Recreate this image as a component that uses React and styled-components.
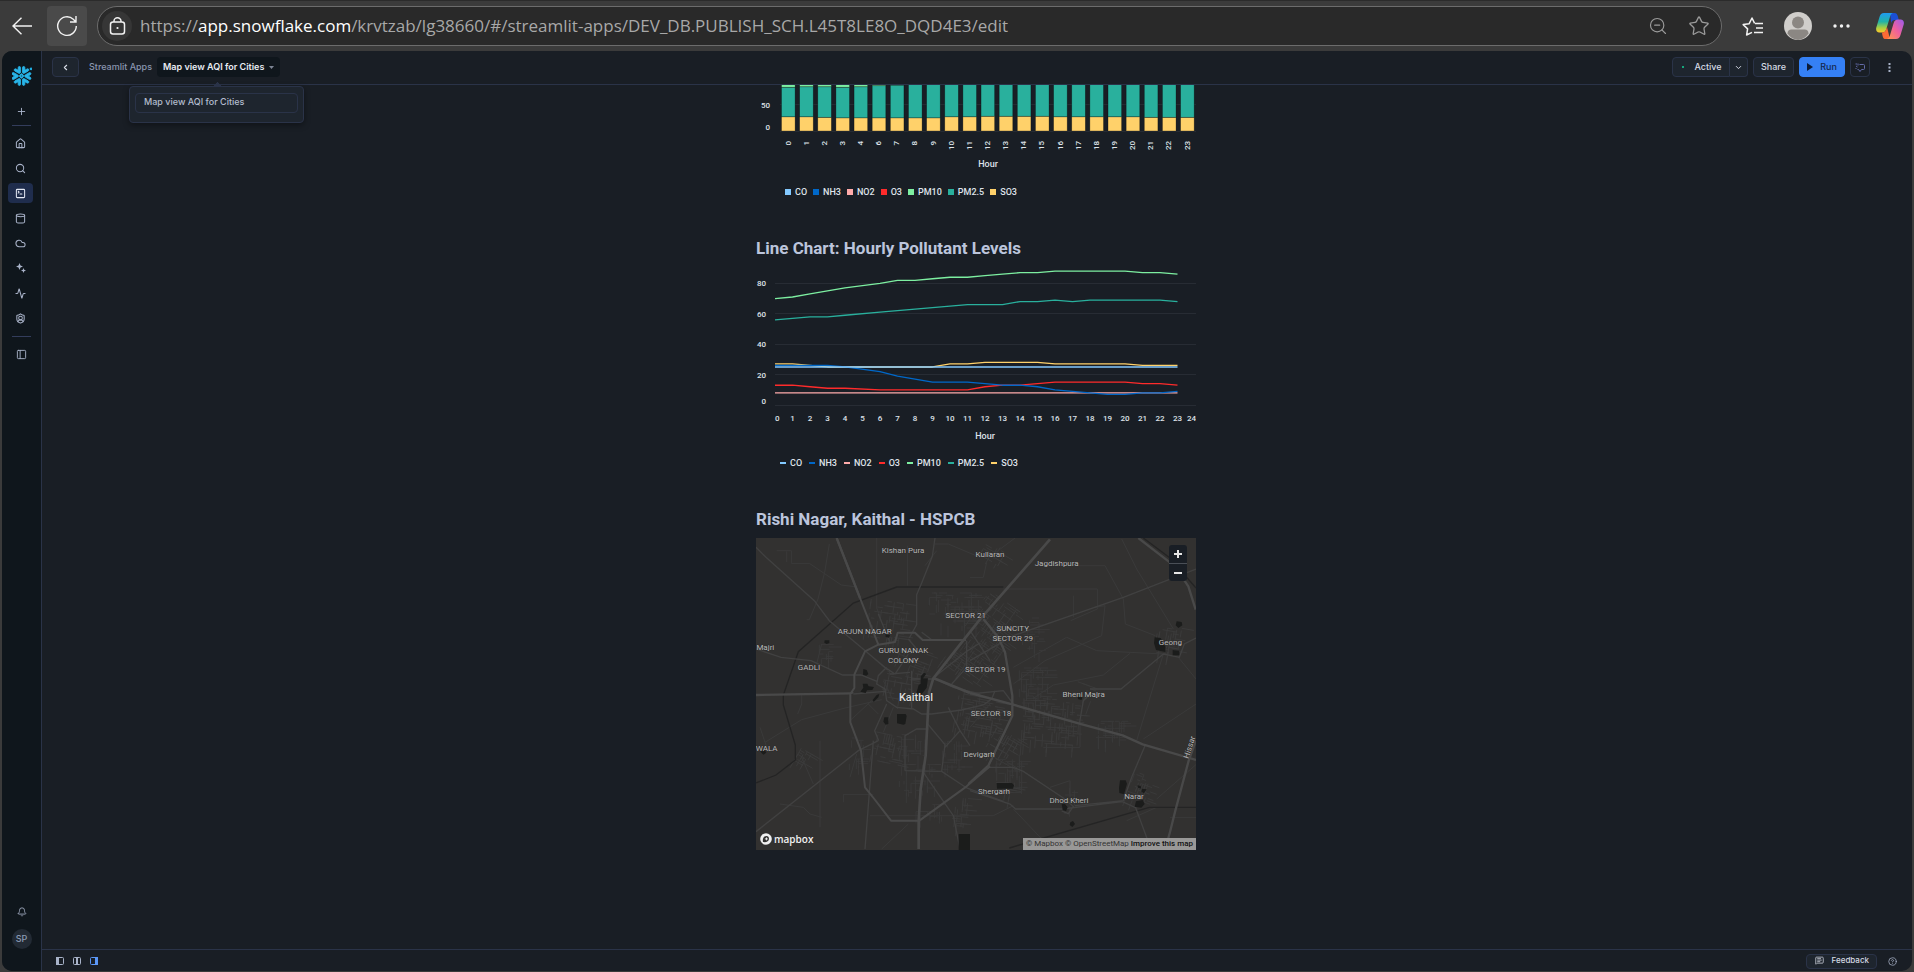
import React from "react";
import styled, { createGlobalStyle } from "styled-components";
import {
  Activity, Bell, ChevronDown, ChevronLeft, CircleHelp, Cloud, Cylinder, House,
  MessageSquareText, PanelLeft, Plus, Search, ShieldUser, SquareTerminal, Star, ZoomOut,
} from "lucide-react";
import { SiSnowflake } from "react-icons/si";

const c = {
  chrome: "#3b3b3b",
  page: "#191e25",
  side: "#0f161c",
  line: "#2a3348",
  raised: "#1e252e",
  text: "#d5dae4",
  muted: "#8a96b0",
  blue: "#3580f5",
};

const GlobalStyle = createGlobalStyle`
  *, *::before, *::after { box-sizing: border-box; }
  body { margin: 0; background: ${c.chrome}; font-family: Inter, "Liberation Sans", sans-serif; }
  button { font: inherit; color: inherit; background: none; border: 0; padding: 0; cursor: pointer; }
  a { color: inherit; text-decoration: none; }
  svg { display: block; flex: none; }
`;

/* ---------- shell ---------- */

const Window = styled.div`
  display: flex;
  flex-direction: column;
  height: 100vh;
  background: ${c.chrome};
`;

const BrowserBar = styled.header`
  display: flex;
  align-items: center;
  height: 51px;
  flex: none;
  padding: 0 4px 0 12px;
  border-top: 1px solid #2b2b2b;
  color: #f2f2f2;
`;

const BrowserButton = styled.button`
  display: grid;
  place-items: center;
  width: ${(p) => p.$w}px;
  height: 40px;
  border-radius: 4px;
  background: ${(p) => (p.$filled ? "#4a4a4a" : "none")};
`;

const BackGroup = styled.div`
  display: flex;
  gap: 15px;
  margin-right: 10px;
`;

const AddressBar = styled.div`
  display: flex;
  align-items: center;
  flex: 1;
  min-width: 0;
  height: 40px;
  padding: 0 13px 0 4px;
  border: 1px solid #6c6c6c;
  border-radius: 20px;
  background: #292929;
  color: #9b9b9b;
`;

const SiteInfo = styled.button`
  display: grid;
  place-items: center;
  flex: none;
  width: 30px;
  height: 30px;
  margin-right: 8px;
  border-radius: 50%;
  background: #363636;
  color: #f2f2f2;
`;

const Url = styled.div`
  flex: 1;
  min-width: 0;
  overflow: hidden;
  white-space: nowrap;
  font: 17px/28px "Open Sans", sans-serif;
  color: #a8a8a8;
  outline: none;
  strong { font-weight: 400; color: #fff; }
`;

const AddressActions = styled.div`
  display: flex;
  gap: 20px;
`;

const BrowserActions = styled.div`
  display: flex;
  align-items: center;
  gap: 20px;
  margin-left: 20px;
`;

const AppFrame = styled.div`
  display: flex;
  flex: 1;
  min-height: 0;
  margin: 0 2px 1px;
  border-radius: 10px;
  overflow: hidden;
  background: ${c.page};
`;

/* ---------- sidebar ---------- */

const Sidebar = styled.nav`
  display: flex;
  flex-direction: column;
  align-items: center;
  flex: none;
  width: 40px;
  padding: 15px 0 22px;
  background: ${c.side};
  border-right: 1px solid ${c.line};
  color: #a9b3c9;
`;

const Logo = styled.a`
  color: #29b5e8;
  margin-bottom: 15px;
  svg { stroke-width: 1; }
`;

const NavList = styled.div`
  display: flex;
  flex-direction: column;
  gap: 5px;
  margin-right: 2px;
`;

const NavButton = styled.button`
  display: grid;
  place-items: center;
  width: 25px;
  height: 20px;
  border-radius: 4px;
  color: ${(p) => (p.$active ? "#e4e9f5" : "inherit")};
  background: ${(p) => (p.$active ? "#1f2d4d" : "none")};
`;

const Rule = styled.hr`
  width: 19px;
  height: 1px;
  margin: ${(p) => p.$gap};
  border: 0;
  background: #333d5c;
`;

const SidebarFoot = styled.div`
  display: flex;
  flex-direction: column;
  align-items: center;
  gap: 7px;
  margin-top: auto;
`;

const Avatar = styled.button`
  width: 20px;
  height: 20px;
  border-radius: 50%;
  background: #222a34;
  color: #8a9bb5;
  font-size: 9px;
  line-height: 20px;
  font-weight: 500;
`;

/* ---------- top bar ---------- */

const Main = styled.div`
  display: flex;
  flex-direction: column;
  flex: 1;
  min-width: 0;
`;

const TopBar = styled.div`
  display: flex;
  align-items: center;
  justify-content: space-between;
  flex: none;
  height: 34px;
  padding: 0 14px 1px 10px;
  border-bottom: 1px solid ${c.line};
  font-size: 9px;
  line-height: 12px;
  font-weight: 500;
  color: ${c.text};
`;

const Group = styled.div`
  display: flex;
  align-items: center;
  gap: 5px;
`;

const Crumb = styled.a`
  margin-left: 5px;
  color: ${c.muted};
`;

const BoxButton = styled.button`
  display: flex;
  align-items: center;
  justify-content: center;
  gap: 7px;
  height: 20px;
  width: ${(p) => p.$w}px;
  border: 1px solid ${(p) => (p.$primary ? c.blue : c.line)};
  border-radius: 4px;
  background: ${(p) => (p.$primary ? c.blue : p.$bare ? "none" : c.raised)};
  color: ${(p) => (p.$primary ? "#14284d" : "inherit")};
`;

const SplitButton = styled.div`
  display: flex;
  ${BoxButton}:first-child { border-radius: 4px 0 0 4px; }
  ${BoxButton}:last-child { border-radius: 0 4px 4px 0; border-left: 0; }
`;

const StatusDot = styled.i`
  width: 2px;
  height: 2px;
  margin: 0 3px 0 2px;
  background: #16a67c;
`;

const TitleMenu = styled.div`
  position: relative;
`;

const TitleButton = styled.button`
  display: flex;
  align-items: center;
  gap: 5px;
  height: 20px;
  padding: 0 6px;
  border-radius: 4px;
  background: ${c.side};
  font-weight: 600;
  color: #e8ebf2;
  white-space: nowrap;
`;

const Popover = styled.div`
  position: absolute;
  z-index: 2;
  top: 29px;
  left: -28px;
  width: 175px;
  height: 37px;
  padding: 6px 5px;
  border: 1px solid ${c.line};
  border-radius: 4px;
  background: ${c.raised};
  box-shadow: 0 2px 6px #0006;
  &::before {
    content: "";
    position: absolute;
    top: -4px;
    left: 84px;
    width: 7px;
    height: 7px;
    background: ${c.line};
    transform: rotate(45deg);
    clip-path: polygon(0 0, 100% 0, 0 100%);
  }
`;

const PopoverItem = styled.button`
  display: block;
  width: 100%;
  height: 20px;
  padding: 0 8px 2px;
  border: 1px solid ${c.line};
  border-radius: 4px;
  text-align: left;
  color: #b3bccd;
`;

const MoreButton = styled.button`
  display: grid;
  place-items: center;
  width: 18px;
  height: 20px;
  margin-left: 5px;
  color: #a9b3c9;
`;

/* ---------- report ---------- */

const Scroll = styled.main`
  flex: 1;
  min-height: 0;
  padding-right: 2px;
  overflow: auto;
`;

const Report = styled.div`
  width: 100%;
  max-width: 440px;
  margin: 0 auto;
  font-family: Roboto, sans-serif;
`;

const Heading = styled.h3`
  margin: 39px 0 7px;
  font-size: 17px;
  line-height: 24px;
  font-weight: 700;
  color: #bcc5dc;
`;

const Chart = styled.svg`
  width: 100%;
  height: auto;
  text { font-family: Roboto, sans-serif; font-size: 8px; font-weight: 500; fill: #dfe3ea; }
`;

const AxisTitle = styled.text`
  && { font-size: 9px; }
`;

const Legend = styled.ul`
  display: flex;
  gap: ${(p) => p.$gap}px;
  margin: 14px 0 0;
  padding: 0 0 0 ${(p) => p.$indent}px;
  list-style: none;
`;

const LegendItem = styled.li`
  display: flex;
  align-items: center;
  gap: 4px;
  font-size: 9px;
  line-height: 10px;
  font-weight: 500;
  color: #dfe3ea;
  &::before {
    content: "";
    width: 6px;
    height: ${(p) => (p.$flat ? 2 : 6)}px;
    background: ${(p) => p.$color};
  }
`;

const MapFrame = styled.div`
  position: relative;
  overflow: hidden;
  background: #323130;
`;

const MapArt = styled.svg`
  width: 100%;
  height: auto;
  fill: none;
  text {
    font-family: Roboto, sans-serif;
    font-size: 24px;
    fill: #b9b9b9;
    stroke: #2a2929;
    stroke-width: 2px;
    paint-order: stroke;
    text-anchor: middle;
  }
`;

const ZoomControl = styled.div`
  position: absolute;
  top: 7px;
  right: 9px;
  display: flex;
  flex-direction: column;
  border-radius: 3px;
  background: ${c.page};
`;

const ZoomButton = styled.button`
  display: grid;
  place-items: center;
  width: 18px;
  height: 18px;
  color: #e6e6e6;
  & + & { border-top: 1px solid #4a4f57; }
`;

const MapLogo = styled.a`
  position: absolute;
  left: 4px;
  bottom: 5px;
  display: flex;
  align-items: center;
  gap: 2px;
  font: 600 10px/12px "Open Sans", sans-serif;
  color: #f0f0f0;
`;

const Attribution = styled.div`
  position: absolute;
  right: 0;
  bottom: 0;
  display: flex;
  gap: 2px;
  padding: 0 3px;
  font: 8px/12px Roboto, sans-serif;
  color: #333;
  background: #999897;
  strong { font-weight: 500; color: #111; }
`;

/* ---------- bottom bar ---------- */

const BottomBar = styled.footer`
  display: flex;
  align-items: center;
  justify-content: space-between;
  flex: none;
  height: 22px;
  padding: 1px 15px 0 14px;
  border-top: 1px solid ${c.line};
  color: #a9b3c9;
`;

const LayoutButtons = styled.div`
  display: flex;
  gap: 9px;
`;

const LayoutButton = styled.button`
  color: ${(p) => (p.$active ? "#5b97f7" : "inherit")};
`;

const Feedback = styled.button`
  display: flex;
  align-items: center;
  gap: 8px;
  height: 15px;
  padding: 0 7px 2px 8px;
  border: 1px solid ${c.line};
  border-radius: 4px;
  background: ${c.raised};
  font-size: 8px;
  line-height: 10px;
  font-weight: 500;
  color: ${c.text};
`;

const FootGroup = styled.div`
  display: flex;
  align-items: center;
  gap: 11px;
`;

/* ---------- data ---------- */

const HOURS = [0, 1, 2, 3, 4, 6, 7, 8, 9, 10, 11, 12, 13, 14, 15, 16, 17, 18, 19, 20, 21, 22, 23];
const SERIES = [
  { name: "CO", color: "#83c9ff", values: HOURS.map(() => 25) },
  { name: "NH3", color: "#0068c9", values: [26, 26, 26, 26, 25, 22, 19, 17, 15, 15, 15, 14, 13, 13, 12, 10, 9, 8, 7, 7, 8, 8, 9] },
  { name: "NO2", color: "#ffabab", values: HOURS.map(() => 8) },
  { name: "O3", color: "#ff2b2b", values: [13, 13, 12, 11, 11, 10, 10, 10, 10, 10, 10, 12, 13, 13, 14, 15, 15, 15, 15, 15, 14, 14, 13] },
  { name: "PM10", color: "#7defa1", values: [70, 71, 73, 75, 77, 80, 82, 82, 83, 84, 84, 85, 86, 87, 87, 88, 88, 88, 88, 88, 87, 87, 86] },
  { name: "PM2.5", color: "#29b09d", values: [56, 57, 58, 58, 59, 61, 62, 63, 64, 65, 66, 66, 66, 68, 68, 69, 68, 69, 69, 69, 69, 69, 68] },
  { name: "SO3", color: "#ffd16a", values: [27, 27, 26, 25, 25, 25, 25, 25, 25, 27, 27, 28, 28, 28, 28, 27, 27, 27, 27, 27, 26, 26, 26] },
];

function BarChart() {
  const base = 46;
  const unit = 0.527;
  const stack = [SERIES[6], SERIES[5], SERIES[4]];
  return (
    <Chart viewBox="0 0 440 88" role="img" aria-label="Stacked bar chart by hour">
      <path d="M24 19.5H440M24 46.5H440" stroke="#262b33" />
      {HOURS.map((hour, i) => {
        const x = 25.5 + i * 18.14;
        let total = 0;
        return (
          <g key={hour}>
            {stack.map((s) => {
              const bottom = base - total * unit;
              total += s.values[i];
              const top = base - total * unit;
              return (
                <rect key={s.name} x={x} y={top} width="13.6" height={bottom - top} fill={s.color} stroke="#000" strokeOpacity=".4" strokeWidth=".7" />
              );
            })}
            <text transform={`translate(${x + 9} 56) rotate(-90)`} textAnchor="end">
              {hour}
            </text>
          </g>
        );
      })}
      <text x="14" y="23" textAnchor="end">50</text>
      <text x="14" y="45" textAnchor="end">0</text>
      <AxisTitle x="232" y="82" textAnchor="middle">Hour</AxisTitle>
    </Chart>
  );
}

function LineChart() {
  const y = (v) => 138 - v * 1.521;
  const x = (h) => 19 + h * 17.5;
  return (
    <Chart viewBox="0 0 440 177" role="img" aria-label="Line chart by hour">
      {[0, 20, 40, 60, 80].map((v) => (
        <g key={v}>
          <path d={`M19 ${Math.floor(y(v)) + 0.5}H440`} stroke="#272c34" />
          <text x="10" y={v ? y(v) + 3 : 137} textAnchor="end">{v}</text>
        </g>
      ))}
      {[...SERIES].reverse().map((s) => (
        <polyline
          key={s.name}
          fill="none"
          stroke={s.color}
          strokeWidth="1.3"
          strokeLinejoin="round"
          points={s.values.map((v, i) => `${x(HOURS[i])},${y(v)}`).join(" ")}
        />
      ))}
      {Array.from({ length: 25 }, (_, h) => (
        <text key={h} x={h === 24 ? 440 : x(h)} y="154" textAnchor={h === 24 ? "end" : h === 0 ? "start" : "middle"}>
          {h}
        </text>
      ))}
      <AxisTitle x="229" y="172" textAnchor="middle">Hour</AxisTitle>
    </Chart>
  );
}

const SeriesLegend = ({ flat, indent, gap }) => (
  <Legend $indent={indent} $gap={gap}>
    {SERIES.map((s) => (
      <LegendItem key={s.name} $color={s.color} $flat={flat}>{s.name}</LegendItem>
    ))}
  </Legend>
);

/* ---------- map ---------- */

// Street blocks: x, y, width, height, number of streets, rotation.
const BLOCKS = [
  [330, 190, 120, 120, 60, 8], [520, 165, 150, 110, 70, 0], [420, 330, 110, 70, 26, 20],
  [380, 400, 110, 90, 40, 10], [660, 180, 110, 110, 60, 35], [620, 260, 110, 170, 90, 35],
  [560, 350, 80, 60, 30, 35], [600, 470, 140, 120, 90, 10], [790, 390, 90, 120, 60, 0],
  [800, 470, 170, 160, 120, 4], [690, 580, 90, 90, 50, 30], [430, 590, 80, 70, 24, 0],
  [350, 590, 90, 90, 36, 12], [430, 680, 110, 90, 40, 0], [560, 610, 60, 90, 26, 0],
  [720, 650, 80, 100, 36, 0], [800, 240, 60, 110, 26, 0], [1020, 550, 90, 60, 40, 0],
  [1200, 265, 80, 90, 34, 10], [1120, 710, 70, 90, 30, 20], [590, 780, 50, 90, 26, 5],
  [120, 640, 50, 50, 20, 30], [190, 320, 40, 50, 14, 0], [480, 800, 80, 40, 16, 0],
  [680, 15, 70, 60, 16, 30], [720, 740, 70, 40, 14, 10], [280, 600, 60, 90, 14, 0],
  [920, 750, 50, 60, 12, 0], [955, 440, 60, 50, 12, 20],
];

function streets() {
  let seed = 7;
  const rnd = () => (seed = (seed * 16807) % 2147483647) / 2147483647;
  return BLOCKS.map(([x, y, w, h, n, r]) => {
    let d = "";
    for (let i = 0; i < n; i += 1) {
      const px = x + Math.floor((rnd() * w) / 7) * 7;
      const py = y + Math.floor((rnd() * h) / 7) * 7;
      const len = 10 + rnd() * 32;
      d += rnd() > 0.5 ? `M${px} ${py}h${len.toFixed(0)}` : `M${px} ${py}v${len.toFixed(0)}`;
    }
    return { d, t: `rotate(${r} ${x + w / 2} ${y + h / 2})` };
  });
}
const STREETS = streets();

const PLACES = [
  [441, 44, "Kishan Pura"], [702, 56, "Kullaran"], [902, 84, "Jagdishpura"], [629, 241, "SECTOR 21"],
  [326, 287, "ARJUN NAGAR"], [770, 279, "SUNCITY"], [770, 309, "SECTOR 29"], [28, 337, "Majri"],
  [442, 344, "GURU NANAK"], [442, 375, "COLONY"], [159, 395, "GADLI"], [1243, 320, "Geong"],
  [688, 402, "SECTOR 19"], [983, 477, "Bheni Majra"], [705, 534, "SECTOR 18"], [32, 639, "WALA"],
  [669, 656, "Devigarh"], [714, 768, "Shergarh"], [939, 795, "Dhod Kheri"], [1134, 782, "Narar"],
];

const CityMap = () => (
  <MapArt viewBox="0 0 1320 936" role="img" aria-label="Map of Kaithal">
    <g stroke="#3b3b3b" strokeWidth="2.5">
      {STREETS.map((s, i) => <path key={i} d={s.d} transform={s.t} />)}
    </g>
    {/* lanes */}
    <g transform="translate(-48 -132)" stroke="#3a3a3a" strokeWidth="3">
      <path d="M110 170h44v38h54l96 65 40 5M140 172v32M268 150l-14 85-20 80-26 62h-8M410 132v210l10 25M502 155v120M585 150h40l95 40M590 170l-35 45M245 450l-15 60M165 600h20v30l-12 30M75 745l110-68 130-35 110-25M60 700l15 45 10 30M240 740v260M185 790l35 80M330 850l20-70M120 930l70 10 20 20 35 10M390 965h330M425 1065l80-75M310 925v-24h90M460 640l-30 75M385 630l30 30M330 680l65-60M430 560l30 60" />
    </g>
    <g transform="translate(642 -132)" stroke="#3a3a3a" strokeWidth="3">
      <path d="M455 135l45 90 110 180M200 215h205l55 100 6 75 90 35M0 250h40l10-45M135 132l-60 45M100 285h282v60l-80 35M310 305v65M375 340l30-5-10 90-170 75-95 70M130 520l160-90 90 40 200 10M480 478l-80 65-150 30-60 40M580 480l-80 260M625 490l53 65M520 735l158-105M680 810l-120 105M220 1040l-90-95M80 860v-60M240 880l60-20v50M285 960v-20M560 940l-90 40M0 965h70l60-30M155 800v95h-50M330 690v70h-110M0 700l60-70M600 970h78" />
    </g>
    {/* railways */}
    <g stroke="#242424" strokeWidth="4">
      <path d="M0 735l60-24 58-45v-45l-36-120v-30l45-130L292 195l130-48h320M760 930l420-122h140M1162 0l80 60 78 90" />
    </g>
    {/* secondary roads */}
    <g transform="translate(-48 -132)" stroke="#414141" strokeWidth="4">
      <path d="M48 160l30 30 145 130 45 60 105 88 70 60M48 465l75 25 90 10 95 43h55l50 20M585 132l-8 55-32 80-15 35v90l-22 40M415 360l35 85M375 470l60 50 30 20 40-60M340 600l95-8M545 415l30 22M505 435l25 30M440 520l-25 25-5 25 25 15 5 35 30 20 50 5 25 15h30l90-12 65-15 25-18 10-25M400 740l-25 325M48 1013L355 770l60-30M440 630l-36 80 12 30M495 830v-105l35-20h35M495 830l110 2 10-80-52-62M605 832l75 50 110 40M550 835l90 130 20 100M625 640l35 70-45 50M660 710l30 45M515 530v115M515 555h65M450 540l60-5M580 552l100-80 40-25M580 552l60 28 80 20M680 440v80l-45 50" />
    </g>
    <g transform="translate(642 -132)" stroke="#414141" strokeWidth="4">
      <path d="M0 500l130-75 330-115 218-85M580 480L453 585H360M360 600l-20 20-12 70M580 480l48 10 15-40 35-18M525 755l-40 95-25 70M55 820h75l30 12 120 80 30 25-15 22-20-8M0 890l120 40 17 15h140l180-22 40 18 35 95M315 935l145-15M0 600l100-10 30 40M40 370l60 90M0 410l60 90" />
    </g>
    {/* main roads */}
    <g transform="translate(-48 -132)" stroke="#494949" strokeWidth="6" strokeLinejoin="round">
      <path d="M290 132l70 180 55 140-40 20-32 70v40l-12 18v85l32 85 12 110 28 35 50 65h85M415 452l50-8 8-28h52l23 22h130M332 598l8-3M535 982l145-105 70-60" />
      <path d="M48 603l285-5M290 132l70 180" strokeWidth="7" />
      <path d="M536 1065v-85l6-95 15-100 10-190 13-42 75-95 65-82 210-240M580 552l110 45" strokeWidth="8" />
    </g>
    <g transform="translate(642 -132)" stroke="#494949" strokeWidth="7" strokeLinejoin="round">
      <path d="M40 375l45 55 20 45 22 130v60l-72 150-60 55M0 597l130 35 198 57 130 35 60 27 160 47M505 132l110 85 40 60 22 70M678 740l-22 60-40 150-15 60-15 55" />
    </g>
    {/* water and parks */}
    <g fill="#1b1c1b">
      <path d="M206 307h14v8l-8 3-7-4zM322 393l10 3 5 12-6 5-10-3zM320 437h14l4 8 16 2-5 9-16 1-4 8-16-4 9-12zM350 486l12-15 8-3-3 10-14 14zM385 538h12v20l-8 2-7-9zM423 528h26l3 6-4 24-6 2-19-4zM494 415l10-11 7 3-10 14h15l-4 28-15 20h-17l8-28 6-4zM388 288l14 4-3 7-10-2z" />
      <path d="M722 735h46l6 7-3 10h-48zM917 798h10l8 10-5 12-10-4zM943 853l8-4 6 9-8 9-8-6zM608 888h34v48h-34zM1092 727h17l4 10-9 32-14-4-1-15zM1140 790l20-4 6 12-10 11-20-3zM1144 742l10 2 2 8-10-3zM1158 752l14 2-8 12-8-5zM1262 250l15 2 2 10-12 8-8-8zM1196 298l18 2 14 26v16l-28-6-6-20zM1250 336l20 2v14h-20zM965 476h14l-2 10-10-2zM12 640l14-4 5 8-9 6z" />
    </g>
    {PLACES.map(([x, y, label]) => <text key={label} x={x} y={y}>{label}</text>)}
    <text x="480" y="490" style={{ fontSize: 33, fontWeight: 500, fill: "#dcdcdc" }}>Kaithal</text>
    <text transform="translate(1308 630) rotate(-72)">Hissar</text>
  </MapArt>
);

/* ---------- small drawings ---------- */

const ReloadIcon = () => (
  <svg width="22" height="22" viewBox="0 0 22 22" fill="none" stroke="currentColor" strokeWidth="1.4">
    <path d="M20.3 11a9.3 9.3 0 1 1-3-6.8l2.2 2.3M20 1v6h-6" />
  </svg>
);
const ArrowIcon = () => (
  <svg width="20" height="18" viewBox="0 0 20 18" fill="none" stroke="currentColor" strokeWidth="1.4">
    <path d="M20 9H1M9.5.7 1 9l8.500 8.300" />
  </svg>
);
const LockIcon = () => (
  <svg width="17" height="18" viewBox="0 0 17 18" fill="none" stroke="currentColor" strokeWidth="1.5">
    <rect x="1.500" y="5" width="14" height="12" rx="2.500" />
    <path d="M5 5V4a3.500 3.200 0 0 1 7 0v1" />
    <circle cx="8.500" cy="11" r="1.100" fill="currentColor" stroke="none" />
  </svg>
);
const FavoritesIcon = () => (
  <svg width="22" height="20" viewBox="0 0 22 20" fill="none" stroke="currentColor" strokeWidth="1.500" strokeLinejoin="round">
    <path d="M10 16.300 4.600 19l1-6.100L1.200 8.600l6-.9L10 2l2.600 5.300M13 7.500h8M14 12h7M12 16.500h9" />
  </svg>
);
const ProfileIcon = () => (
  <svg width="28" height="28" viewBox="0 0 28 28">
    <circle cx="14" cy="14" r="14" fill="#d0cecb" />
    <circle cx="14" cy="10.500" r="6" fill="#8b8783" />
    <path d="M3.500 21.500c0-2.500 1.500-4 4-4h13c2.500 0 4 1.500 4 4A14 14 0 0 1 14 28 14 14 0 0 1 3.500 21.500z" fill="#8b8783" />
  </svg>
);
const DotsIcon = ({ vertical }) => (
  <svg width={vertical ? 3 : 17} height={vertical ? 9 : 4} viewBox={vertical ? "0 0 3 9" : "0 0 17 4"} fill="currentColor">
    {vertical
      ? [0, 3.5, 7].map((y) => <rect key={y} x=".5" y={y} width="2" height="2" />)
      : [2, 8.5, 15].map((x) => <circle key={x} cx={x} cy="2" r="1.700" />)}
  </svg>
);
const CopilotIcon = () => (
  <svg width="28" height="26" viewBox="0 0 28 26">
    <defs>
      <linearGradient id="cpA" x1="0" y1="0" x2="0" y2="1">
        <stop offset="0" stopColor="#1f9bf0" /><stop offset=".45" stopColor="#22b3a6" />
        <stop offset=".75" stopColor="#a5cf45" /><stop offset="1" stopColor="#ffc928" />
      </linearGradient>
      <linearGradient id="cpB" x1="1" y1="0" x2="0" y2="1">
        <stop offset="0" stopColor="#9a5bf0" /><stop offset=".5" stopColor="#f0609c" /><stop offset="1" stopColor="#ff9a4a" />
      </linearGradient>
    </defs>
    <path d="M14 0h4.500c1.900 0 2.700 1.200 3.200 2.800L22.800 7h-4c-2 0-3 1-3.600 3z" fill="#1b4fd6" />
    <path d="M8 0h9c-1.800.6-2.500 2-3 3.700l-3.600 12c-.8 2.700-2 3.800-4.400 3.800H3.400C.8 19.500-.4 17.200.3 14.500L3.500 4C4.300 1.300 5.500 0 8 0z" fill="url(#cpA)" />
    <path d="M6 19.500c2.400 0 3.600-1 4.400-3.800L11 14l3 12h-4.500c-2.200 0-2.900-1.800-3.500-6.500z" fill="#fb6a35" />
    <path d="M20 26h-9c1.800-.6 2.500-2 3-3.700l3.600-12c.8-2.700 2-3.800 4.400-3.800h2.600c2.600 0 3.800 2.300 3.100 5L24.500 22c-.8 2.700-2 4-4.500 4z" fill="url(#cpB)" />
  </svg>
);
const LayoutIcon = ({ x, w }) => (
  <svg width="8" height="8" viewBox="0 0 8 8">
    <rect x=".5" y=".5" width="7" height="7" rx="1" fill="none" stroke="currentColor" />
    <rect x={x} y="0" width={w} height="8" fill="currentColor" />
  </svg>
);
const BranchIcon = () => (
  <svg width="10" height="9" viewBox="0 0 10 9" fill="none" stroke="#636aa8" strokeWidth="1">
    <path d="M4.500 1.500h4q1 0 1 1v3q0 1-1 1H6.500L5 8.500 3.500 6.500h-1M.5 1h1.500M1 3l1.500 1M3 .5v2M.5 5.500h1" />
  </svg>
);
const SparkleIcon = () => (
  <svg width="10" height="10" viewBox="0 0 10 10" fill="currentColor">
    <path d="M3.500 0l1 2.500 2.500 1-2.500 1-1 2.500-1-2.500L0 3.500l2.500-1zM7.500 5l.7 1.800 1.800.7-1.800.7L7.500 10l-.7-1.800L5 7.500l1.800-.7z" />
  </svg>
);

const NAV = [
  ["Home", House], ["Search", Search], ["Projects", SquareTerminal], ["Data", Cylinder],
  ["Products", Cloud], ["AI", SparkleIcon], ["Monitoring", Activity], ["Admin", ShieldUser],
];

export default function App() {
  return (
    <Window>
      <GlobalStyle />
      <BrowserBar>
        <BackGroup>
          <BrowserButton $w={20} aria-label="Back"><ArrowIcon /></BrowserButton>
          <BrowserButton $w={40} $filled aria-label="Reload"><ReloadIcon /></BrowserButton>
        </BackGroup>
        <AddressBar>
          <SiteInfo aria-label="Site information"><LockIcon /></SiteInfo>
          <Url role="textbox" aria-label="Address" tabIndex={0}>
            https://<strong>app.snowflake.com</strong>/krvtzab/lg38660/#/streamlit-apps/DEV_DB.PUBLISH_SCH.L45T8LE8O_DQD4E3/edit
          </Url>
          <AddressActions>
            <BrowserButton $w={20} aria-label="Zoom out"><ZoomOut size={20} strokeWidth={1.4} /></BrowserButton>
            <BrowserButton $w={20} aria-label="Favorite"><Star size={22} strokeWidth={1.4} /></BrowserButton>
          </AddressActions>
        </AddressBar>
        <BrowserActions>
          <BrowserButton $w={22} aria-label="Favorites"><FavoritesIcon /></BrowserButton>
          <BrowserButton $w={28} aria-label="Profile"><ProfileIcon /></BrowserButton>
          <BrowserButton $w={18} aria-label="More"><DotsIcon /></BrowserButton>
          <BrowserButton $w={40} aria-label="Copilot"><CopilotIcon /></BrowserButton>
        </BrowserActions>
      </BrowserBar>

      <AppFrame>
        <Sidebar>
          <Logo href="#" aria-label="Snowflake"><SiSnowflake size={20} stroke="currentColor" /></Logo>
          <NavButton aria-label="Create"><Plus size={11} /></NavButton>
          <Rule $gap="4px 0 7px" />
          <NavList>
            {NAV.map(([label, Icon]) => (
              <NavButton key={label} aria-label={label} $active={label === "Projects"}>
                <Icon size={11} strokeWidth={2.2} />
              </NavButton>
            ))}
          </NavList>
          <Rule $gap="8px 0 7px" />
          <NavButton aria-label="Collapse sidebar"><PanelLeft size={11} /></NavButton>
          <SidebarFoot>
            <NavButton aria-label="Notifications"><Bell size={10} /></NavButton>
            <Avatar>SP</Avatar>
          </SidebarFoot>
        </Sidebar>

        <Main>
          <TopBar>
            <Group>
              <BoxButton $w={27} aria-label="Back"><ChevronLeft size={9} strokeWidth={3} /></BoxButton>
              <Crumb href="#">Streamlit Apps</Crumb>
              <TitleMenu>
                <TitleButton>
                  Map view AQI for Cities
                  <svg width="5" height="3" viewBox="0 0 5 3" fill="#7d8595"><path d="M0 0h5L2.500 3z" /></svg>
                </TitleButton>
                <Popover>
                  <PopoverItem>Map view AQI for Cities</PopoverItem>
                </Popover>
              </TitleMenu>
            </Group>
            <Group>
              <SplitButton>
                <BoxButton $w={58}><StatusDot />Active</BoxButton>
                <BoxButton $w={18} aria-label="Status menu"><ChevronDown size={9} strokeWidth={2.5} /></BoxButton>
              </SplitButton>
              <BoxButton $w={41}>Share</BoxButton>
              <BoxButton $w={46} $primary>
                <svg width="6" height="8" viewBox="0 0 6 8" fill="#0d1c38"><path d="M0 0l6 4-6 4z" /></svg>
                Run
              </BoxButton>
              <BoxButton $w={20} $bare aria-label="History"><BranchIcon /></BoxButton>
              <MoreButton aria-label="More"><DotsIcon vertical /></MoreButton>
            </Group>
          </TopBar>

          <Scroll>
            <Report>
              <BarChart />
              <SeriesLegend indent={29} gap={6} />
              <Heading>Line Chart: Hourly Pollutant Levels</Heading>
              <LineChart />
              <SeriesLegend flat indent={24} gap={7} />
              <Heading>Rishi Nagar, Kaithal - HSPCB</Heading>
              <MapFrame>
                <CityMap />
                <ZoomControl>
                  <ZoomButton aria-label="Zoom in">
                    <svg width="8" height="8" viewBox="0 0 8 8" stroke="currentColor" strokeWidth="2"><path d="M4 0v8M0 4h8" /></svg>
                  </ZoomButton>
                  <ZoomButton aria-label="Zoom out">
                    <svg width="8" height="8" viewBox="0 0 8 8" stroke="currentColor" strokeWidth="2"><path d="M0 4h8" /></svg>
                  </ZoomButton>
                </ZoomControl>
                <MapLogo href="#">
                  <svg width="12" height="12" viewBox="0 0 12 12">
                    <circle cx="6" cy="6" r="5.800" fill="#f0f0f0" />
                    <path d="M3 9c-.6-3 .5-6 3.400-6A2.800 2.800 0 0 1 9 5.800C9 8.500 6 9.600 3 9z" fill="#323130" />
                    <path d="M6.400 4l.6 1.300 1.300.6-1.300.6-.6 1.300-.6-1.300-1.300-.6 1.300-.6z" fill="#f0f0f0" />
                  </svg>
                  mapbox
                </MapLogo>
                <Attribution>
                  <a href="#">© Mapbox</a>
                  <a href="#">© OpenStreetMap</a>
                  <a href="#"><strong>Improve this map</strong></a>
                </Attribution>
              </MapFrame>
            </Report>
          </Scroll>

          <BottomBar>
            <LayoutButtons>
              <LayoutButton aria-label="Left pane"><LayoutIcon x={0} w={3} /></LayoutButton>
              <LayoutButton aria-label="Split panes"><LayoutIcon x={3} w={2} /></LayoutButton>
              <LayoutButton $active aria-label="Right pane"><LayoutIcon x={5} w={3} /></LayoutButton>
            </LayoutButtons>
            <FootGroup>
              <Feedback><MessageSquareText size={9} />Feedback</Feedback>
              <LayoutButton aria-label="Help"><CircleHelp size={9} /></LayoutButton>
            </FootGroup>
          </BottomBar>
        </Main>
      </AppFrame>
    </Window>
  );
}
